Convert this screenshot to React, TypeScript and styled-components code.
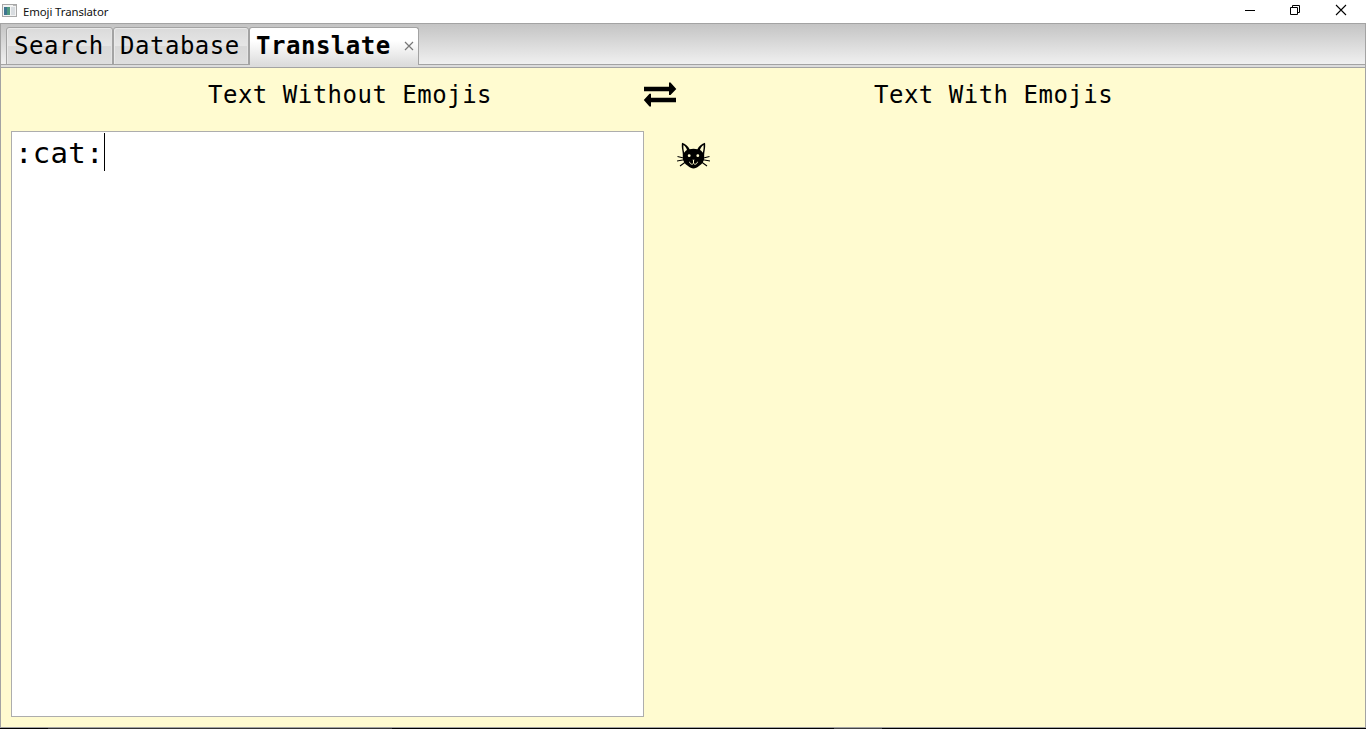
import React from 'react';
import styled, { createGlobalStyle, css } from 'styled-components';

const Global = createGlobalStyle`
  * { box-sizing: border-box; }
  html, body { margin: 0; padding: 0; overflow: hidden; background: #fff; }
`;

const mono = css`
  font-family: 'DejaVu Sans Mono', 'Liberation Mono', monospace;
  color: #000;
  white-space: pre;
`;

const Screen = styled.div`
  width: 1366px;
  height: 729px;
  display: flex;
  flex-direction: column;
`;

const TitleBar = styled.header`
  height: 23px;
  flex: none;
  display: flex;
  align-items: flex-start;
  background: #fff;
  padding-left: 2px;
`;

const Title = styled.h1`
  margin: 0 auto 0 5px;
  font: 400 11.4px/24px 'Noto Sans', 'Open Sans', sans-serif;
  letter-spacing: -0.1px;
  color: #111;
  white-space: nowrap;
`;

const WindowButton = styled.button`
  width: 46px;
  height: 23px;
  padding: 0;
  border: 0;
  background: none;
  display: flex;

  svg { display: block; }
`;

const Frame = styled.main`
  flex: 1;
  display: flex;
  flex-direction: column;
  border: 1px solid #a3a3a3;
  background: #fffbd0;
`;

const TabStrip = styled.nav`
  height: 44px;
  flex: none;
  display: flex;
  align-items: flex-start;
  padding: 3px 0 0 5px;
  border-bottom: 1px solid #a3a3a3;
  background:
    linear-gradient(#a3a3a3, #a3a3a3) 0 40px / 100% 1px no-repeat,
    linear-gradient(#dcdcdc, #dcdcdc) 0 41px / 100% 2px no-repeat,
    linear-gradient(#c4c4c4, #f0f0f0 40px);
`;

const Tab = styled.div<{ $width: number; $inset: number; $active?: boolean }>`
  ${mono}
  width: ${p => p.$width}px;
  height: 38px;
  flex: none;
  display: flex;
  align-items: center;
  border: 1px solid #a3a3a3;
  border-radius: 3px 3px 0 0;
  padding: 0 0 ${p => (p.$active ? 1 : 0)}px ${p => p.$inset}px;
  font-size: 24px;
  line-height: 34px;
  letter-spacing: 0.52px;
  font-weight: ${p => (p.$active ? 700 : 400)};
  background: ${p =>
    p.$active
      ? 'linear-gradient(#fff 0, #fff 35%, #dcdcdc 100%)'
      : 'linear-gradient(#dadada 0, #e6e6e6 50%, #d9d9d9 51%, #dedede 100%)'};
  box-shadow: ${p => (p.$active ? 'none' : 'inset 1px 1px 0 #e9e9e9, inset -1px 0 0 #e4e4e4')};
  ${p => p.$active && 'border-bottom: 0;'}
`;

const CloseIcon = styled.svg`
  display: block;
  margin: 0 4.5px 0 auto;
`;

const Headings = styled.div`
  height: 63px;
  flex: none;
  display: flex;
  padding-top: 10px;
`;

const Heading = styled.h2<{ $inset: number; $width: number }>`
  ${mono}
  margin: 0;
  width: ${p => p.$width}px;
  padding-left: ${p => p.$inset}px;
  font-size: 24px;
  font-weight: 400;
  line-height: 34px;
  letter-spacing: 0.5px;
`;

const SwapButton = styled.button`
  width: 33px;
  height: 34px;
  padding: 0;
  border: 0;
  background: none;

  svg { display: block; }
`;

const Panes = styled.div`
  flex: 1;
  display: flex;
  padding: 0 10px;
`;

const Editor = styled.div`
  ${mono}
  width: 633px;
  height: 586px;
  display: flex;
  align-items: flex-start;
  padding: 1px 0 0 3px;
  border: 1px solid #adadad;
  background: #fff;
  font-size: 29px;
  line-height: 40px;
  letter-spacing: 0.28px;
`;

const Caret = styled.span`
  width: 1px;
  height: 38px;
  background: #000;
`;

const Output = styled.div`
  padding: 10px 0 0 33px;

  svg { display: block; }
`;

const Taskbar = styled.footer`
  height: 1px;
  flex: none;
  background: linear-gradient(90deg, #000 48px, #333 48px, #333 392px, #000 392px, #000 834px, #444 834px, #444 882px, #000 882px);
`;

const AppIcon = () => (
  <svg width="16" height="19" viewBox="0 -3 16 19" shapeRendering="crispEdges">
    <rect x="0" y="1" width="15" height="13" fill="#a8a8a8" />
    <rect x="1" y="2" width="13" height="11" fill="#f3f3f3" />
    <rect x="2" y="4" width="6" height="8" fill="#4f9a80" />
    <rect x="2" y="4" width="3" height="8" fill="#3f7590" />
    <rect x="9" y="4" width="4" height="8" fill="#d8dce0" />
    <rect x="11" y="2" width="3" height="1" fill="#b8b8b8" />
  </svg>
);

const Cat = () => (
  <svg width="34" height="28" viewBox="0 0 34 28">
    <path d="M5.800 16.500C5.800 14 5.900 12.500 5.300 9.500C4.800 6.500 4.600 4 5 1.700C8.200 2.500 11.200 5.300 12.600 8.200C15 7.500 18 7.500 20.400 8.200C21.800 5.300 24.800 2.500 28 1.700C28.400 4 28.200 6.500 27.700 9.500C27.100 12.500 27.200 14 27.200 16.500C27.200 20.300 25.300 22.800 22.300 24.700C20 26.500 18.500 27.400 16.500 27.400C14.500 27.400 13 26.500 10.700 24.700C7.700 22.800 5.800 20.300 5.800 16.500Z" fill="#000" />
    <path d="M6.500 4C8.300 5.200 9.400 6.900 10 9.100C8.600 9.900 7.900 10.700 7.300 11.700C6.500 9.200 6.200 6.500 6.500 4ZM26.500 4C24.700 5.200 23.600 6.900 23 9.100C24.400 9.900 25.100 10.700 25.700 11.700C26.500 9.200 26.800 6.500 26.500 4Z" fill="#fffbd0" />
    <g fill="#fffbd0">
      <circle cx="12.200" cy="14.700" r="1.400" />
      <circle cx="20.800" cy="14.700" r="1.400" />
      <path d="M15.300 18.700h2.400l-1.200 1.200z" />
    </g>
    <path d="M16.500 19v3M12.500 20.800C13 23.300 15.500 24 16.500 22.300C17.500 24 20 23.300 20.500 20.800" fill="none" stroke="#fffbd0" strokeWidth="1" />
    <path d="M.5 15.500L6.500 17M0 20L7 18.800M3 25L8.500 21M32.500 15.500L26.500 17M33 20L26 18.800M30 25L24.500 21" stroke="#000" strokeWidth="1.100" />
  </svg>
);

export default function App() {
  return (
    <Screen>
      <Global />
      <TitleBar>
        <AppIcon />
        <Title>Emoji Translator</Title>
        <WindowButton aria-label="Minimize">
          <svg width="46" height="23"><path d="M17 10.500h10" stroke="#000" /></svg>
        </WindowButton>
        <WindowButton aria-label="Restore">
          <svg width="46" height="23" fill="none" stroke="#000">
            <path d="M16.500 7.500h7v7h-7zM18.500 7V5.500h7v7H24" />
          </svg>
        </WindowButton>
        <WindowButton aria-label="Close">
          <svg width="46" height="23"><path d="M16 5l10 10M26 5L16 15" stroke="#000" strokeWidth="1.100" /></svg>
        </WindowButton>
      </TitleBar>
      <Frame>
        <TabStrip>
          <Tab $width={107} $inset={7}>Search</Tab>
          <Tab $width={136} $inset={6}>Database</Tab>
          <Tab $width={170} $inset={6} $active>
            Translate
            <CloseIcon width="10" height="10" viewBox="0 0 10 10">
              <path d="M1 1l8 8M9 1L1 9" stroke="#777" strokeWidth="1.200" />
            </CloseIcon>
          </Tab>
        </TabStrip>
        <Headings>
          <Heading $width={642} $inset={207}>Text Without Emojis</Heading>
          <SwapButton aria-label="Swap">
            <svg width="34" height="34" viewBox="0 0 34 34">
              <path d="M1 8.700h25V4.500h1.500L33.300 11l-5.800 6H26v-3.700H1zM33 19.700H8v-4H6.500L.8 22l5.700 6.500H8v-4.200h25z" />
            </svg>
          </SwapButton>
          <Heading $width={688} $inset={198}>Text With Emojis</Heading>
        </Headings>
        <Panes>
          <Editor>:cat:<Caret /></Editor>
          <Output><Cat /></Output>
        </Panes>
      </Frame>
      <Taskbar />
    </Screen>
  );
}
